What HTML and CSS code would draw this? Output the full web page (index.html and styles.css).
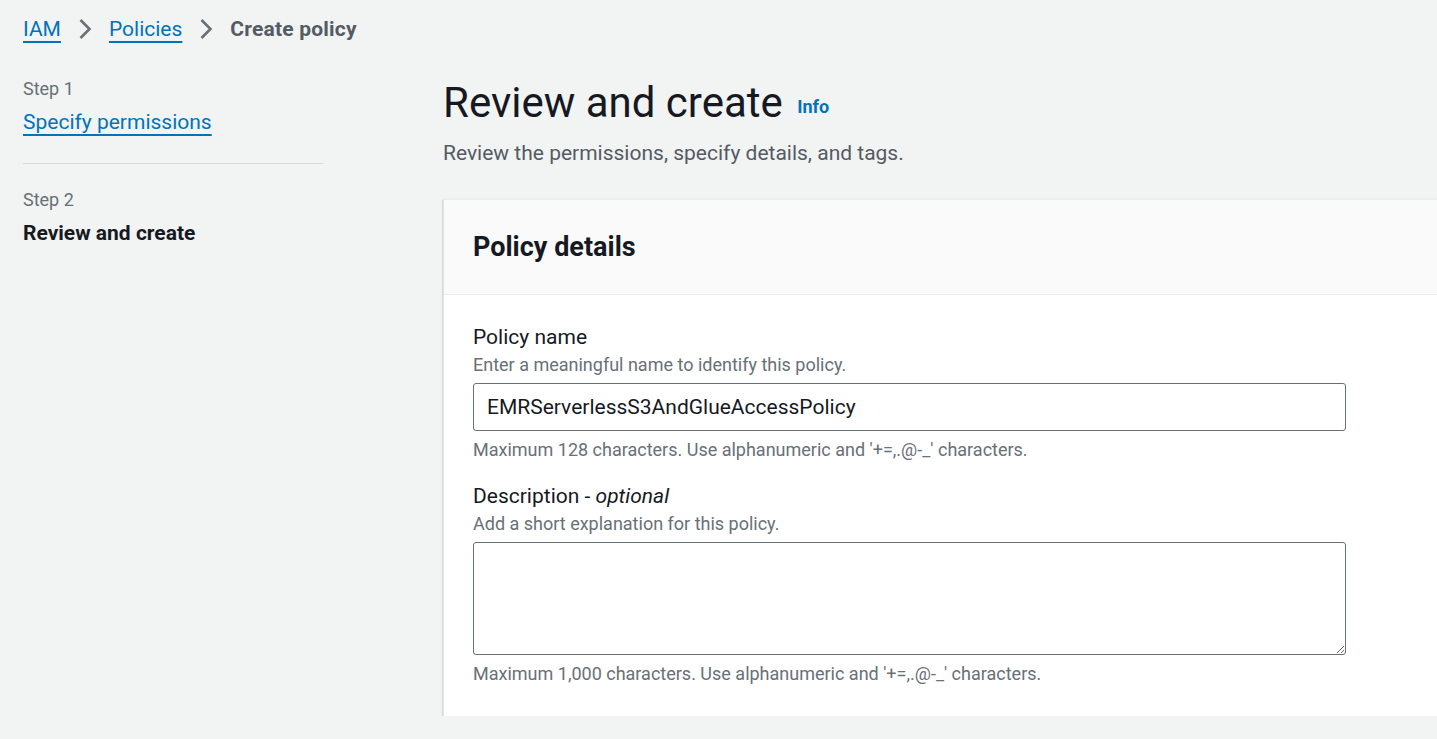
FILE: index.html
```html
<!DOCTYPE html>
<html lang="en">
<head>
<meta charset="utf-8">
<title>Create policy</title>
<link rel="stylesheet" href="styles.css">
</head>
<body>
<div class="page">
  <nav class="breadcrumbs">
    <a class="crumb-link" href="#">IAM</a>
    <svg class="chev" viewBox="0 0 14 22" width="14" height="22"><path d="M2.5 2 L11.5 11 L2.5 20" fill="none" stroke="#687078" stroke-width="2.6"/></svg>
    <a class="crumb-link" href="#">Policies</a>
    <svg class="chev" viewBox="0 0 14 22" width="14" height="22"><path d="M2.5 2 L11.5 11 L2.5 20" fill="none" stroke="#687078" stroke-width="2.6"/></svg>
    <span class="crumb-current">Create policy</span>
  </nav>
  <div class="layout">
    <aside class="steps">
      <div class="step">
        <div class="step-num">Step 1</div>
        <a class="step-link" href="#">Specify permissions</a>
      </div>
      <div class="step step-active">
        <div class="step-num">Step 2</div>
        <div class="step-title">Review and create</div>
      </div>
    </aside>
    <main class="main">
      <header class="page-header">
        <h1 class="title">Review and create <a class="info" href="#">Info</a></h1>
        <p class="subtitle">Review the permissions, specify details, and tags.</p>
      </header>
      <section class="card">
        <div class="card-header">
          <h2 class="card-title">Policy details</h2>
        </div>
        <div class="card-body">
          <div class="field">
            <label class="label">Policy name</label>
            <div class="hint">Enter a meaningful name to identify this policy.</div>
            <input class="input" type="text" value="EMRServerlessS3AndGlueAccessPolicy">
            <div class="constraint">Maximum 128 characters. Use alphanumeric and '+=,.@-_' characters.</div>
          </div>
          <div class="field">
            <label class="label">Description - <i>optional</i></label>
            <div class="hint">Add a short explanation for this policy.</div>
            <textarea class="textarea"></textarea>
            <div class="constraint">Maximum 1,000 characters. Use alphanumeric and '+=,.@-_' characters.</div>
          </div>
        </div>
      </section>
    </main>
  </div>
</div>
</body>
</html>
```
FILE: styles.css
```css
html, body {
  margin: 0;
  padding: 0;
  background: #f2f3f3;
  overflow: hidden;
}
body {
  font-family: Roboto, "Noto Sans", sans-serif;
  color: #16191f;
}
.page {
  padding: 0 0 0 23px;
  width: 1600px;
}
.breadcrumbs {
  display: flex;
  align-items: center;
  height: 58px;
  gap: 17px;
  font-size: 21px;
}
.crumb-link {
  color: #0073bb;
  text-decoration: underline;
  text-decoration-thickness: 2px;
  text-underline-offset: 5px;
}
.chev { display: block; }
.crumb-current {
  color: #545b64;
  font-weight: 700;
  letter-spacing: 0.2px;
}
.layout {
  display: flex;
  gap: 120px;
}
.steps {
  width: 300px;
  flex: none;
}
.step {
  padding-top: 19px;
}
.step:first-child {
  border-bottom: 1px solid #d5dbdb;
  padding-bottom: 27px;
}
.step + .step {
  padding-top: 24px;
}
.step-num {
  font-size: 18px;
  color: #687078;
  line-height: 24px;
  margin-bottom: 7px;
}
.step-link {
  font-size: 21px;
  color: #0073bb;
  text-decoration: underline;
  text-decoration-thickness: 2px;
  text-underline-offset: 5px;
  line-height: 28px;
}
.step-title {
  font-size: 21px;
  font-weight: 700;
  line-height: 28px;
}
.main {
  flex: none;
  width: 1100px;
}
.page-header {
  padding-top: 19px;
}
.title {
  margin: 0;
  font-size: 42px;
  font-weight: 400;
  line-height: 52px;
  color: #16191f;
}
.info {
  font-size: 18px;
  font-weight: 700;
  color: #0073bb;
  text-decoration: none;
  vertical-align: 4px;
  margin-left: 4px;
}
.subtitle {
  margin: 6px 0 0;
  font-size: 21px;
  line-height: 28px;
  color: #545b64;
}
.card {
  margin-top: 32px;
  background: #fff;
  border-left: 1px solid #e0e3e6;
  border-top: 1px solid #eaeded;
  box-shadow: 0 1px 2px rgba(0, 28, 36, 0.3);
}
.card-header {
  background: #fafafa;
  border-bottom: 1px solid #eaeded;
  height: 94px;
  display: flex;
  align-items: center;
  padding: 0 29px;
}
.card-title {
  margin: 0;
  font-size: 27px;
  font-weight: 700;
  color: #16191f;
}
.card-body {
  padding: 27px 29px 29px;
}
.field {
  width: 873px;
}
.field + .field {
  margin-top: 18px;
}
.label {
  display: block;
  font-size: 21px;
  line-height: 30px;
  color: #16191f;
}
.hint {
  font-size: 18px;
  line-height: 26px;
  color: #687078;
  margin-bottom: 5px;
}
.input, .textarea {
  display: block;
  box-sizing: border-box;
  width: 873px;
  border: 1px solid #687078;
  border-radius: 3px;
  background: #fff;
  font-family: inherit;
  color: #16191f;
  margin: 0;
}
.input {
  height: 48px;
  font-size: 21px;
  padding: 0 13px;
}
.textarea {
  height: 113px;
  font-size: 21px;
  padding: 8px 13px;
  resize: vertical;
}
.constraint {
  margin-top: 6px;
  font-size: 18px;
  line-height: 26px;
  color: #687078;
}
```
